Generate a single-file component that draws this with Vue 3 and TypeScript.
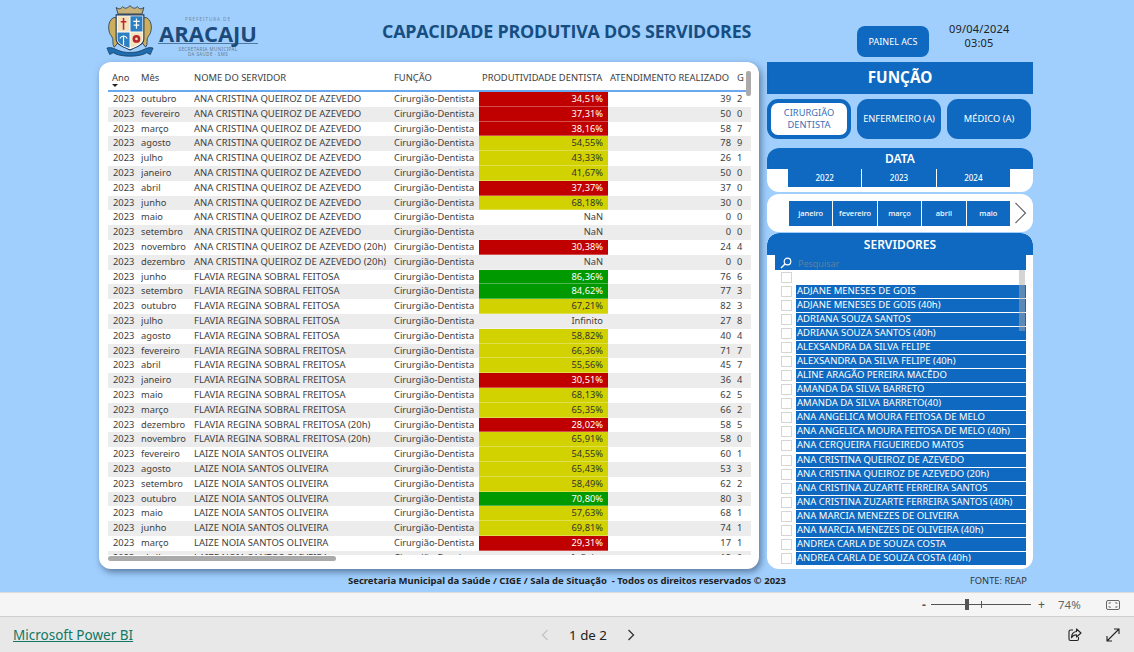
<script setup lang="ts">
const ANA = 'ANA CRISTINA QUEIROZ DE AZEVEDO'
const FEITOSA = 'FLAVIA REGINA SOBRAL FEITOSA'
const FREITOSA = 'FLAVIA REGINA SOBRAL FREITOSA'
const LAIZE = 'LAIZE NOIA SANTOS OLIVEIRA'

type Row = [string, string, string, string, string]

const rows: Row[] = [
  ['outubro', ANA, '34,51%', '39', '2'],
  ['fevereiro', ANA, '37,31%', '50', '0'],
  ['março', ANA, '38,16%', '58', '7'],
  ['agosto', ANA, '54,55%', '78', '9'],
  ['julho', ANA, '43,33%', '26', '1'],
  ['janeiro', ANA, '41,67%', '50', '0'],
  ['abril', ANA, '37,37%', '37', '0'],
  ['junho', ANA, '68,18%', '30', '0'],
  ['maio', ANA, 'NaN', '0', '0'],
  ['setembro', ANA, 'NaN', '0', '0'],
  ['novembro', ANA + ' (20h)', '30,38%', '24', '4'],
  ['dezembro', ANA + ' (20h)', 'NaN', '0', '0'],
  ['junho', FEITOSA, '86,36%', '76', '6'],
  ['setembro', FEITOSA, '84,62%', '77', '3'],
  ['outubro', FEITOSA, '67,21%', '82', '3'],
  ['julho', FEITOSA, 'Infinito', '27', '8'],
  ['agosto', FEITOSA, '58,82%', '40', '4'],
  ['fevereiro', FREITOSA, '66,36%', '71', '7'],
  ['abril', FREITOSA, '55,56%', '45', '7'],
  ['janeiro', FREITOSA, '30,51%', '36', '4'],
  ['maio', FREITOSA, '68,13%', '62', '5'],
  ['março', FREITOSA, '65,35%', '66', '2'],
  ['dezembro', FREITOSA + ' (20h)', '28,02%', '58', '5'],
  ['novembro', FREITOSA + ' (20h)', '65,91%', '58', '0'],
  ['fevereiro', LAIZE, '54,55%', '60', '1'],
  ['agosto', LAIZE, '65,43%', '53', '3'],
  ['setembro', LAIZE, '58,49%', '62', '2'],
  ['outubro', LAIZE, '70,80%', '80', '3'],
  ['maio', LAIZE, '57,63%', '68', '1'],
  ['junho', LAIZE, '69,81%', '74', '1'],
  ['março', LAIZE, '29,31%', '17', '1'],
  ['abril', LAIZE, 'Infinito', '12', '0'],
]

function band(value: string): string {
  const n = parseFloat(value.replace(',', '.'))
  if (Number.isNaN(n)) return 'none'
  if (n < 40) return 'red'
  if (n < 70) return 'yellow'
  return 'green'
}

const years = ['2022', '2023', '2024']
const months = ['janeiro', 'fevereiro', 'março', 'abril', 'maio']
const servers = [
  '',
  'ADJANE MENESES DE GOIS',
  'ADJANE MENESES DE GOIS (40h)',
  'ADRIANA SOUZA SANTOS',
  'ADRIANA SOUZA SANTOS (40h)',
  'ALEXSANDRA DA SILVA FELIPE',
  'ALEXSANDRA DA SILVA FELIPE (40h)',
  'ALINE ARAGÃO PEREIRA MACÊDO',
  'AMANDA DA SILVA BARRETO',
  'AMANDA DA SILVA BARRETO(40)',
  'ANA ANGELICA MOURA FEITOSA DE MELO',
  'ANA ANGELICA MOURA FEITOSA DE MELO (40h)',
  'ANA CERQUEIRA FIGUEIREDO MATOS',
  'ANA CRISTINA QUEIROZ DE AZEVEDO',
  'ANA CRISTINA QUEIROZ DE AZEVEDO (20h)',
  'ANA CRISTINA ZUZARTE FERREIRA SANTOS',
  'ANA CRISTINA ZUZARTE FERREIRA SANTOS (40h)',
  'ANA MARCIA MENEZES DE OLIVEIRA',
  'ANA MARCIA MENEZES DE OLIVEIRA (40h)',
  'ANDREA CARLA DE SOUZA COSTA',
  'ANDREA CARLA DE SOUZA COSTA (40h)',
]
</script>

<template>
  <div class="page">
    <main class="canvas">
      <header class="top">
        <div class="logo">
          <svg class="crest" width="48" height="55" viewBox="0 0 52 58">
            <path d="M13 10 L11 3 C14 5 16 5 18 2 C20 4 22 5 26 1 C30 5 32 4 34 2 C36 5 38 5 41 3 L39 10 Z" fill="#c7b27a" stroke="#33404f" stroke-width="1" />
            <path d="M8 14 C1 18 2 30 6 34 C9 37 6 43 9 46 L13 41 L12 14 Z" fill="#cdae5c" stroke="#2f4860" stroke-width="1" />
            <path d="M44 14 C51 18 50 30 46 34 C43 37 46 43 43 46 L39 41 L40 14 Z" fill="#cdae5c" stroke="#2f4860" stroke-width="1" />
            <path d="M11 11 H41 V37 C41 43 33 46 26 49 C19 46 11 43 11 37 Z" fill="#fff" stroke="#1d3550" stroke-width="1.200" />
            <rect x="12.500" y="12.500" width="13" height="16.500" fill="#f3e3bd" />
            <rect x="26.500" y="12.500" width="13" height="16.500" fill="#2c7fc0" />
            <path d="M12.500 30 H25.500 V46.500 C20 45 12.500 42 12.500 37 Z" fill="#2c7fc0" />
            <path d="M26.500 30 H39.500 V37 C39.500 42 32 45 26.500 46.500 Z" fill="#f3e3bd" />
            <path d="M19 14.500 V27 M16 18.500 H22" stroke="#c8202a" stroke-width="1.700" fill="none" />
            <path d="M33 15 V26 M29.500 18 L36.500 18 M30 22 L36 22" stroke="#fff" stroke-width="1.300" fill="none" />
            <path d="M19 34 V44 M15 36.500 C17 33 21 33 23 36.500" stroke="#fff" stroke-width="1.300" fill="none" />
            <circle cx="33" cy="37" r="4.200" fill="#b9232e" />
            <circle cx="33" cy="37" r="1.500" fill="#f3e3bd" />
            <path d="M1 47 C7 45 10 49 18 51 C23 52 29 52 34 51 C42 49 45 45 51 47 L48 54 L44 52 C38 57 14 57 8 52 L4 54 Z" fill="#1f6cae" stroke="#173a5c" stroke-width=".8" />
          </svg>
          <div class="brand">
            <span class="brand-top">PREFEITURA DE</span>
            <span class="brand-name">ARACAJU</span>
            <span class="brand-sub">SECRETARIA MUNICIPAL<br />DA SAÚDE - SMS</span>
          </div>
        </div>
        <h1 class="title">CAPACIDADE PRODUTIVA DOS SERVIDORES</h1>
        <div class="painel">PAINEL ACS</div>
        <div class="stamp">09/04/2024<br />03:05</div>
      </header>

      <section class="body">
        <div class="card">
          <div class="table">
            <div class="row head">
              <span class="ano">Ano<i class="sort"></i></span>
              <span>Mês</span>
              <span>NOME DO SERVIDOR</span>
              <span>FUNÇÃO</span>
              <span class="h-prod">PRODUTIVIDADE DENTISTA</span>
              <span class="h-at">ATENDIMENTO REALIZADO</span>
              <span class="g">G</span>
            </div>
            <div v-for="(r, i) in rows" :key="i" class="row">
              <span class="c-ano">2023</span>
              <span>{{ r[0] }}</span>
              <span class="c-name">{{ r[1] }}</span>
              <span>Cirurgião-Dentista</span>
              <span class="num prod" :class="band(r[2])">{{ r[2] }}</span>
              <span class="num">{{ r[3] }}</span>
              <span class="g">{{ r[4] }}</span>
            </div>
          </div>
          <div class="vbar"></div>
          <div class="hbar"></div>
        </div>

        <aside class="side">
          <div class="funcao">FUNÇÃO</div>
          <div class="tabs">
            <button class="tab on">CIRURGIÃO<br />DENTISTA</button>
            <button class="tab">ENFERMEIRO (A)</button>
            <button class="tab">MÉDICO (A)</button>
          </div>
          <div class="data-card">
            <div class="cap">DATA</div>
            <div class="years">
              <span v-for="y in years" :key="y">{{ y }}</span>
            </div>
          </div>
          <div class="month-card">
            <div class="months">
              <span v-for="m in months" :key="m">{{ m }}</span>
            </div>
            <svg width="13" height="24" viewBox="0 0 13 24">
              <path d="M1.500 2 L11.500 12 L1.500 22" fill="none" stroke="#666" stroke-width="1.200" />
            </svg>
          </div>
          <div class="serv-card">
            <div class="cap serv-cap">SERVIDORES</div>
            <div class="search">
              <svg width="12" height="12" viewBox="0 0 12 12">
                <circle cx="7.500" cy="4.500" r="3.300" fill="none" stroke="#fff" stroke-width="1.200" />
                <path d="M5 7 L1 11" stroke="#fff" stroke-width="1.500" />
              </svg>
              <span>Pesquisar</span>
            </div>
            <ul class="list">
              <li v-for="(s, i) in servers" :key="i">
                <i class="box"></i>
                <span v-if="s" class="name">{{ s }}</span>
              </li>
            </ul>
            <div class="list-bar"></div>
          </div>
        </aside>
      </section>

      <div class="notes">
        <span class="rights">Secretaria Municipal da Saúde / CIGE / Sala de Situação&nbsp; - Todos os direitos reservados © 2023</span>
        <span class="fonte">FONTE: REAP</span>
      </div>
    </main>

    <div class="zoombar">
      <span class="pm">-</span>
      <div class="track"><i class="tick"></i><i class="thumb"></i></div>
      <span class="pm plus">+</span>
      <span class="pct">74%</span>
      <svg class="fit" width="14" height="10" viewBox="0 0 14 10">
        <rect x=".5" y=".5" width="13" height="9" rx="1.500" fill="none" stroke="#666" />
        <path d="M3 4 V2.800 H5 M9 2.800 H11 V4 M11 6 V7.200 H9 M5 7.200 H3 V6" fill="none" stroke="#666" stroke-width=".8" />
      </svg>
    </div>

    <footer class="foot">
      <a class="pbi">Microsoft Power BI</a>
      <div class="pager">
        <svg width="10" height="12" viewBox="0 0 10 12">
          <path d="M7.500 1 L2.500 6 L7.500 11" fill="none" stroke="#c4c4c4" stroke-width="1.300" />
        </svg>
        <span>1 de 2</span>
        <svg width="10" height="12" viewBox="0 0 10 12">
          <path d="M2.500 1 L7.500 6 L2.500 11" fill="none" stroke="#333" stroke-width="1.300" />
        </svg>
      </div>
      <div class="foot-icons">
        <svg width="14" height="14" viewBox="0 0 14 14">
          <path d="M5 2 H2.500 C1.500 2 1 2.500 1 3.500 V11 C1 12 1.500 12.500 2.500 12.500 H9 C10 12.500 10.500 12 10.500 11 V9" fill="none" stroke="#222" stroke-width="1.100" />
          <path d="M8.500 1 L13 5 L8.500 9 V6.800 C6 6.800 4.500 7.800 3.500 9.800 C3.500 6.300 5.500 3.800 8.500 3.500 Z" fill="none" stroke="#222" stroke-width="1.100" stroke-linejoin="round" />
        </svg>
        <svg width="14" height="14" viewBox="0 0 14 14">
          <path d="M1 13 L13 1 M8 1 H13 V6 M1 8 V13 H6" fill="none" stroke="#222" stroke-width="1.100" />
        </svg>
      </div>
    </footer>
  </div>
</template>

<style scoped>
.page {
  width: 1134px;
  height: 652px;
  display: flex;
  flex-direction: column;
  overflow: hidden;
  font-family: "Noto Sans", "Open Sans", sans-serif;
  color: #333;
}

.canvas {
  height: 592px;
  background: #a0cffe;
  display: flex;
  flex-direction: column;
}

.top {
  height: 62px;
  flex: none;
  display: flex;
  align-items: flex-start;
}

.logo {
  display: flex;
  margin: 4px 0 0 106px;
  width: 153px;
  gap: 4px;
}

.crest {
  flex: none;
}

.brand {
  display: flex;
  flex-direction: column;
  align-items: center;
  width: 100px;
}

.brand-top {
  font-size: 4.500px;
  letter-spacing: 1px;
  color: #76879b;
  margin-top: 12px;
  line-height: 6px;
}

.brand-name {
  font-family: "Open Sans", sans-serif;
  font-size: 22px;
  font-weight: 700;
  line-height: 20px;
  padding-top: 1px;
  color: #1d4a78;
  border-bottom: 1px solid #4c78a2;
  width: 100%;
  text-align: center;
  height: 20px;
  white-space: nowrap;
}

.brand-sub {
  font-size: 4.500px;
  line-height: 5px;
  text-align: center;
  letter-spacing: .4px;
  color: #66788c;
  margin-top: 3px;
}

.title {
  margin: 19px 0 0 123px;
  width: 369px;
  font-family: "Open Sans", sans-serif;
  font-size: 17.900px;
  line-height: 24px;
  font-weight: 700;
  letter-spacing: -.24px;
  white-space: nowrap;
  color: #164e82;
}

.painel {
  margin: 26px 0 0 106px;
  width: 72px;
  height: 31px;
  border-radius: 8px;
  background: #0f69c0;
  color: #fff;
  font-size: 9px;
  display: flex;
  align-items: center;
  justify-content: center;
}

.stamp {
  margin: 22px 0 0 20px;
  width: 60px;
  text-align: center;
  font-size: 11px;
  line-height: 14px;
  letter-spacing: .2px;
  color: #222;
  white-space: nowrap;
}

.body {
  display: flex;
  height: 507px;
  flex: none;
  padding-left: 99px;
  gap: 8px;
}

.card {
  width: 660px;
  height: 507px;
  position: relative;
  background: #fff;
  border-radius: 12px;
  box-shadow: 2px 3px 7px rgba(40, 60, 90, .6);
  padding: 8px 8px 0 9px;
  box-sizing: border-box;
}

.table {
  height: 485px;
  overflow: hidden;
}

.row {
  display: grid;
  grid-template-columns: 33px 53px 200px 85px 129px 125px 1fr;
  height: 14.800px;
  line-height: 14.800px;
  font-size: 9.300px;
  white-space: nowrap;
  color: #3e3e3e;
}

.row:nth-child(odd) {
  background: #ececec;
}

.row > span {
  overflow: hidden;
}

.c-name {
  font-size: 9.500px;
}

.head.row {
  height: 22px;
  line-height: 15px;
  background: #fff;
  border-bottom: 2px solid #6aa9f0;
  box-sizing: border-box;
  font-size: 9.400px;
}

.ano {
  position: relative;
  padding-left: 4px;
}

.sort {
  position: absolute;
  left: 4px;
  top: 14px;
  border: 3px solid transparent;
  border-top: 3px solid #222;
  border-bottom: none;
}

.c-ano {
  padding-left: 5px;
}

.h-prod {
  padding-left: 3px;
}

.h-at {
  padding-left: 2px;
}

.num {
  text-align: right;
  padding-right: 2px;
}

.prod {
  padding-right: 5px;
  border-bottom: 1px solid rgba(255, 255, 255, .3);
  box-sizing: border-box;
}

.red {
  background: #c00000;
  color: #fff;
}

.yellow {
  background: #d2d200;
  color: #333;
}

.green {
  background: #009900;
  color: #fff;
}

.g {
  padding-left: 4px;
}

.vbar {
  position: absolute;
  left: 647px;
  top: 9px;
  width: 5px;
  height: 25px;
  border-radius: 2px;
  background: #aaa;
}

.hbar {
  position: absolute;
  left: 9px;
  top: 494px;
  width: 228px;
  height: 5px;
  border-radius: 3px;
  background: #aaa;
}

.side {
  width: 266px;
  display: flex;
  flex-direction: column;
}

.funcao {
  height: 32px;
  line-height: 31px;
  background: #0f69c0;
  color: #fff;
  font-size: 15.300px;
  font-weight: 700;
  text-align: center;
}

.tabs {
  display: flex;
  gap: 6px;
  margin-top: 5px;
}

.tab {
  width: 84px;
  height: 40px;
  padding: 0;
  border: none;
  border-radius: 11px;
  background: #0f69c0;
  color: #fff;
  font-family: inherit;
  font-size: 9.300px;
  line-height: 12px;
}

.tab.on {
  background: #fff;
  color: #3a6fb5;
  border: 4px solid #0f69c0;
  box-sizing: border-box;
}

.data-card {
  margin-top: 9px;
  height: 44px;
  background: #fff;
  border-radius: 12px;
}

.cap {
  height: 21px;
  line-height: 21px;
  background: #0f69c0;
  border-radius: 12px 12px 0 0;
  color: #fff;
  font-size: 12px;
  font-weight: 600;
  text-align: center;
}

.years {
  display: flex;
  gap: 1px;
  margin-left: 21px;
  width: 222px;
}

.years span {
  flex: 1;
  height: 18px;
  line-height: 18px;
  background: #0f69c0;
  color: #fff;
  font-size: 8px;
  font-weight: 500;
  text-align: center;
}

.month-card {
  margin-top: 2px;
  height: 38px;
  background: #fff;
  border-radius: 12px;
  display: flex;
  align-items: center;
  padding-left: 22px;
  gap: 4px;
}

.months {
  display: flex;
  gap: 1px;
  width: 221px;
}

.months span {
  flex: 1;
  height: 25px;
  line-height: 25px;
  background: #0f69c0;
  color: #fff;
  font-size: 7.500px;
  font-weight: 500;
  text-align: center;
}

.serv-card {
  position: relative;
  margin-top: 1px;
  height: 336px;
  background: #fff;
  border-radius: 12px;
  overflow: hidden;
}

.serv-cap {
  height: 22px;
  line-height: 23px;
}

.search {
  margin: 0 7px 0 8px;
  height: 15px;
  background: #0f69c0;
  display: flex;
  align-items: center;
  gap: 6px;
  padding: 1px 0 0 5px;
  box-sizing: border-box;
  font-size: 9px;
  color: #5f7f9f;
}

.list {
  list-style: none;
  margin: 0;
  padding: 0 7px 0 14px;
}

.list li {
  height: 14.080px;
  display: flex;
  align-items: center;
}

.box {
  flex: none;
  width: 9px;
  height: 9px;
  border: 1px solid #d5d5d5;
  background: #fff;
  margin-right: 4px;
}

.name {
  flex: 1;
  height: 13px;
  line-height: 12px;
  background: #0f69c0;
  color: #fff;
  font-size: 9.500px;
  white-space: nowrap;
  overflow: hidden;
  padding-left: 1px;
}

.list-bar {
  position: absolute;
  left: 252px;
  top: 37px;
  width: 6px;
  height: 61px;
  background: rgba(170, 170, 170, .5);
}

.notes {
  display: flex;
  align-items: center;
  height: 23px;
  font-size: 9.500px;
  color: #222;
}

.rights {
  margin-left: 348px;
  width: 622px;
  font-weight: 700;
  white-space: nowrap;
}

.fonte {
  color: #333;
  font-size: 9.300px;
}

.zoombar {
  height: 23px;
  background: #f5f5f5;
  border-top: 1px solid #dcdcdc;
  border-bottom: 1px solid #cfcfcf;
  display: flex;
  align-items: center;
  flex: none;
  color: #555;
  box-sizing: content-box;
}

.pm {
  margin-left: 922px;
  width: 9px;
  font-size: 12px;
  font-weight: 700;
}

.plus {
  margin-left: 7px;
  width: 20px;
  font-weight: 400;
}

.track {
  position: relative;
  width: 100px;
  height: 1px;
  background: #555;
}

.tick {
  position: absolute;
  left: 50px;
  top: -3px;
  width: 1px;
  height: 7px;
  background: #555;
}

.thumb {
  position: absolute;
  left: 34px;
  top: -5px;
  width: 4px;
  height: 11px;
  background: #555;
}

.pct {
  width: 48px;
  font-size: 11.500px;
  color: #666;
}

.foot {
  flex: 1;
  background: #e8e8e8;
  display: grid;
  grid-template-columns: 1fr 1fr 1fr;
  align-items: center;
  padding: 1px 14px 0 13px;
}

.pbi {
  font-size: 13.500px;
  color: #117865;
  text-decoration: underline;
}

.pager {
  display: flex;
  align-items: center;
  justify-content: center;
  gap: 19px;
  font-size: 13.300px;
  color: #222;
  margin-left: 43px;
}

.foot-icons {
  display: flex;
  justify-content: flex-end;
  gap: 24px;
}
</style>

<style>
html,
body {
  margin: 0;
  overflow: hidden;
}
</style>
